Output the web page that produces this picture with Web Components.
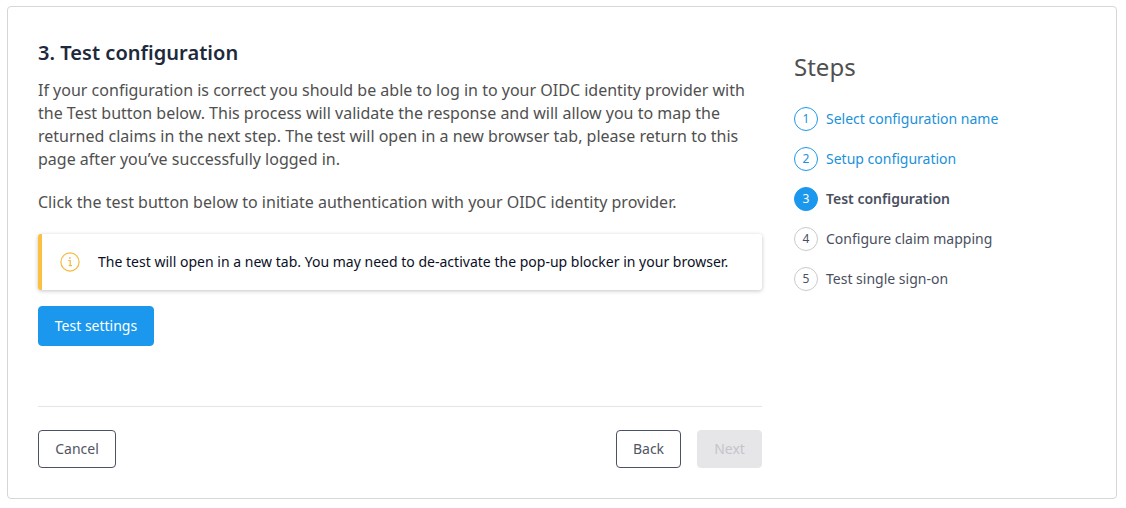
<!DOCTYPE html>
<html lang="en"><head><meta charset="utf-8"><title>Test configuration</title>
<style>
body{margin:0;background:#fff;font-family:"Noto Sans",sans-serif;color:#505050;height:508px;overflow:hidden}
</style></head><body>
<wizard-card>
  <wizard-panel heading="3. Test configuration">
    <p>If your configuration is correct you should be able to log in to your OIDC identity provider with<br>the Test button below. This process will validate the response and will allow you to map the<br>returned claims in the next step. The test will open in a new browser tab, please return to this<br>page after you’ve successfully logged in.</p>
    <p>Click the test button below to initiate authentication with your OIDC identity provider.</p>
    <info-notice>The test will open in a new tab. You may need to de-activate the pop-up blocker in your browser.</info-notice>
    <ui-button variant="primary" style="width:116px">Test settings</ui-button>
    <ui-button slot="start" style="width:78px">Cancel</ui-button>
    <ui-button slot="end" style="width:65px">Back</ui-button>
    <ui-button slot="end" variant="disabled" style="width:65px">Next</ui-button>
  </wizard-panel>
  <step-list slot="side" heading="Steps">
    <step-item number="1" state="done">Select configuration name</step-item>
    <step-item number="2" state="done">Setup configuration</step-item>
    <step-item number="3" state="current">Test configuration</step-item>
    <step-item number="4">Configure claim mapping</step-item>
    <step-item number="5">Test single sign-on</step-item>
  </step-list>
</wizard-card>
<script>
const define = (name, html) => customElements.define(name, class extends HTMLElement {
  constructor() {
    super();
    const t = document.createElement('template');
    t.innerHTML = html;
    this.attachShadow({mode: 'open'}).append(t.content.cloneNode(true));
    this.shadowRoot.querySelectorAll('[data-attr]').forEach(el => {
      el.textContent = this.getAttribute(el.dataset.attr) || '';
    });
  }
});

define('wizard-card', `<style>
:host{display:grid;grid-template-columns:724px 1fr;column-gap:32px;box-sizing:border-box;width:1110px;height:493px;margin:6px 0 0 7px;padding:0 30px;border:1px solid #d6d6d6;border-radius:4px;background:#fff}
</style><slot></slot><slot name="side"></slot>`);

define('wizard-panel', `<style>
:host{display:block;min-width:0}
h2{margin:31px 0 0;font-size:20px;line-height:30px;font-weight:600;letter-spacing:.04px;color:#20283c}
.body{padding-top:11px;height:328px;box-sizing:border-box}
::slotted(p){margin:0 0 20px;font-size:16px;line-height:23px;letter-spacing:.005px;color:#505050;white-space:nowrap}
footer{display:flex;gap:16px;border-top:1px solid #e5e5e5;padding-top:23px;margin-top:10px}
.grow{flex:1}
</style><h2 data-attr="heading"></h2><div class="body"><slot></slot></div>
<footer><slot name="start"></slot><span class="grow"></span><slot name="end"></slot></footer>`);

define('info-notice', `<style>
:host{display:flex;align-items:center;box-sizing:border-box;height:56px;margin-bottom:16px;padding-left:18px;border-left:4px solid #fbc040;border-radius:3px;background:#fff;box-shadow:0 1px 4px rgba(0,0,0,.23);font-size:14px;line-height:20px;letter-spacing:.012px;color:#0b1026;white-space:nowrap}
svg{flex:none;margin-right:18px}
</style><svg width="20" height="20" viewBox="0 0 20 20" fill="none" stroke="#f5b93c"><circle cx="10" cy="10" r="9.1" stroke-width="1.2"/><path d="M8.2 8.5H10.2V13.6M8.8 13.6H12" stroke-width="1.2"/><circle cx="9.9" cy="5.9" r=".9" fill="#f5b93c" stroke="none"/></svg><span><slot></slot></span>`);

define('ui-button', `<style>
:host{display:block}
button{display:flex;align-items:center;justify-content:center;box-sizing:border-box;width:100%;height:38px;margin:0;padding:0;border:1px solid #4c5163;border-radius:4px;background:#fff;color:#505565;font:450 14px/20px "Noto Sans",sans-serif;white-space:nowrap}
:host([variant=primary]) button{height:40px;background:#1b98ed;border-color:#1b98ed;color:#fff}
:host([variant=disabled]) button{background:#e6e6e8;border-color:#e6e6e8;color:#c3c5cb}
</style><button type="button"><slot></slot></button>`);

define('step-list', `<style>
:host{display:block}
h3{margin:42px 0 22px;font-size:24px;line-height:36px;font-weight:400;color:#505050}
div{display:grid;row-gap:16px}
</style><h3 data-attr="heading"></h3><div><slot></slot></div>`);

define('step-item', `<style>
:host{display:flex;align-items:center;gap:8px;height:24px;font-size:14px;line-height:20px;color:#4a4f60;white-space:nowrap}
b{box-sizing:border-box;width:24px;height:24px;border:1px solid #cbcbcb;border-radius:50%;text-align:center;font-size:12px;line-height:21px;font-weight:400}
:host([state=done]){color:#1b91da}
:host([state=done]) b{border-color:#1b98ed}
:host([state=current]){font-weight:600}
:host([state=current]) b{background:#1b98ed;border-color:#1b98ed;color:#fff}
</style><b data-attr="number"></b><span><slot></slot></span>`);
</script>
</body></html>
